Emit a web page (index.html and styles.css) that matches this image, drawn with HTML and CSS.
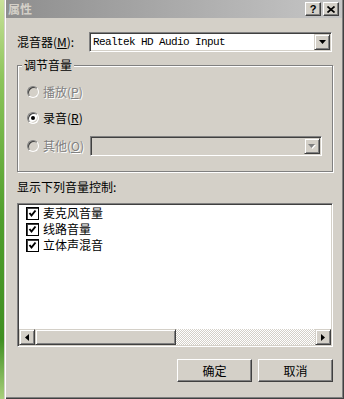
FILE: index.html
```html
<!DOCTYPE html>
<html>
<head>
    <meta charset="utf-8">
    <title>属性</title>
    <link rel="stylesheet" href="styles.css">
</head>
<body>
    <div class="desktop-strip"></div>
    <div class="window">
        <div class="titlebar">
            <span class="title">属性</span>
            <div class="caption-btns">
                <span class="cap-btn help">?</span>
                <span class="cap-btn close">
                    <svg width="8" height="7" viewBox="0 0 8 7"><path d="M0.5 0.5L7.5 6.5M7.5 0.5L0.5 6.5" stroke="#000" stroke-width="1.7"/></svg>
                </span>
            </div>
        </div>

        <div class="dialog-body">
            <div class="mixer-row">
                <label>混音器(<u>M</u>):</label>
                <div class="combo mixer-combo">
                    <span class="combo-text">Realtek HD Audio Input</span>
                    <span class="drop-btn">
                        <svg width="7" height="4" viewBox="0 0 7 4"><path d="M0 0H7L3.5 4Z" fill="#000"/></svg>
                    </span>
                </div>
            </div>

            <fieldset class="group">
                <legend>调节音量</legend>
                <div class="group-inner">
                    <div class="radio-row disabled">
                        <span class="radio"></span><span class="radio-text">播放(<u>P</u>)</span>
                    </div>
                    <div class="radio-row checked">
                        <span class="radio"></span><span class="radio-text">录音(<u>R</u>)</span>
                    </div>
                    <div class="radio-row disabled last">
                        <span class="radio"></span><span class="radio-text">其他(<u>O</u>)</span>
                        <div class="combo other-combo">
                            <span class="drop-btn">
                                <svg width="8" height="5" viewBox="0 0 8 5"><path d="M1 1H8L4.5 5Z" fill="#fff"/><path d="M0 0H7L3.5 4Z" fill="#808080"/></svg>
                            </span>
                        </div>
                    </div>
                </div>
            </fieldset>

            <div class="list-label">显示下列音量控制:</div>
            <div class="listbox">
                <div class="list-items">
                    <div class="list-item"><span class="check"><svg width="9" height="9" viewBox="0 0 9 9"><path d="M1.5 4L3.5 6.5L7.5 1.5" stroke="#000" stroke-width="2" fill="none"/></svg></span>麦克风音量</div>
                    <div class="list-item"><span class="check"><svg width="9" height="9" viewBox="0 0 9 9"><path d="M1.5 4L3.5 6.5L7.5 1.5" stroke="#000" stroke-width="2" fill="none"/></svg></span>线路音量</div>
                    <div class="list-item"><span class="check"><svg width="9" height="9" viewBox="0 0 9 9"><path d="M1.5 4L3.5 6.5L7.5 1.5" stroke="#000" stroke-width="2" fill="none"/></svg></span>立体声混音</div>
                </div>
                <div class="hscroll">
                    <span class="scroll-btn"><svg width="4" height="7" viewBox="0 0 4 7"><path d="M4 0V7L0 3.5Z" fill="#000"/></svg></span>
                    <span class="thumb"></span>
                    <span class="track"></span>
                    <span class="scroll-btn"><svg width="4" height="7" viewBox="0 0 4 7"><path d="M0 0V7L4 3.5Z" fill="#000"/></svg></span>
                </div>
            </div>

            <div class="buttons">
                <button class="btn">确定</button>
                <button class="btn">取消</button>
            </div>
        </div>
    </div>
</body>
</html>
```

FILE: styles.css
```css
body {
    margin: 0;
    padding: 0;
    display: flex;
    height: 399px;
    overflow: hidden;
    background-color: #d4d0c8;
    font-family: "Noto Sans CJK SC", "Liberation Sans", sans-serif;
    font-size: 12px;
    line-height: 14px;
    color: #000;
}
.desktop-strip {
    width: 4px;
    flex: none;
    background: linear-gradient(to bottom, #c9e19a 0%, #8cc45a 20%, #4f9e2c 55%, #3f8f22 85%, #a9cf7c 100%);
}
.window {
    width: 340px;
    height: 399px;
    box-sizing: border-box;
    padding: 0 2px 2px 2px;
    background-color: #d4d0c8;
    box-shadow: inset 1px 0 #d4d0c8, inset 2px 0 #fff, inset -1px -1px #404040, inset -2px -2px #808080;
}

/* title bar (inactive) */
.titlebar {
    height: 18px;
    margin-bottom: 1px;
    display: flex;
    align-items: center;
    justify-content: space-between;
    padding: 0 3px 0 2px;
    background: linear-gradient(to right, #8e8e8e, #c6c6c6);
}
.title {
    color: #d4d0c8;
    font-weight: bold;
}
.caption-btns {
    display: flex;
    gap: 2px;
}
.cap-btn {
    width: 16px;
    height: 14px;
    box-sizing: border-box;
    display: flex;
    align-items: center;
    justify-content: center;
    background-color: #d4d0c8;
    border: 1px solid;
    border-color: #fff #404040 #404040 #fff;
    box-shadow: inset -1px -1px #808080;
    font-family: "Liberation Sans", sans-serif;
    font-weight: bold;
    font-size: 11px;
    line-height: 12px;
}

.dialog-body {
    padding: 13px 9px 0 11px;
}

/* sunken combo box */
.mixer-row {
    display: flex;
    align-items: center;
    height: 20px;
}
.combo {
    height: 20px;
    box-sizing: border-box;
    display: flex;
    align-items: center;
    padding: 1px;
    background-color: #fff;
    border: 1px solid;
    border-color: #808080 #fff #fff #808080;
    box-shadow: inset 1px 1px #404040, inset -1px -1px #d4d0c8;
}
.mixer-combo {
    width: 243px;
    margin-left: auto;
    margin-right: 1px;
}
.combo-text {
    padding-left: 2px;
    font-family: "Liberation Mono", monospace;
    font-size: 11px;
    letter-spacing: -0.6px;
}
.drop-btn {
    width: 16px;
    height: 16px;
    box-sizing: border-box;
    margin-left: auto;
    display: flex;
    align-items: center;
    justify-content: center;
    background-color: #d4d0c8;
    border: 1px solid;
    border-color: #d4d0c8 #404040 #404040 #d4d0c8;
    box-shadow: inset 1px 1px #fff, inset -1px -1px #808080;
}

/* group box */
.group {
    margin: 6px 0 0 0;
    padding: 0;
    min-width: 0;
    border: 1px solid #808080;
    box-shadow: inset 1px 1px #fff, 1px 1px #fff;
}
.group legend {
    margin-left: 4px;
    padding: 0 2px;
    background-color: #d4d0c8;
    line-height: 14px;
}
.group-inner {
    display: flex;
    flex-direction: column;
    gap: 6px;
    padding: 10px 10px 15px 9px;
}
.radio-row {
    height: 20px;
    display: flex;
    align-items: center;
}
.radio-row.last {
    margin-top: 2px;
}
.radio {
    width: 12px;
    height: 12px;
    box-sizing: border-box;
    margin-right: 4px;
    position: relative;
    border-radius: 50%;
    background-color: #fff;
    border: 1px solid;
    border-color: #808080 #fff #fff #808080;
    box-shadow: inset 1px 1px #404040, inset -1px -1px #d4d0c8;
}
.radio-row.disabled .radio {
    background-color: #d4d0c8;
}
.radio-row.checked .radio::after {
    content: "";
    position: absolute;
    left: 3px;
    top: 3px;
    width: 4px;
    height: 4px;
    border-radius: 50%;
    background-color: #000;
}
.radio-row.disabled .radio-text {
    color: #808080;
    text-shadow: 1px 1px #fff;
}
.other-combo {
    width: 232px;
    margin-left: auto;
    background-color: #d4d0c8;
}

.list-label {
    margin-top: 8px;
}

/* list box with check items */
.listbox {
    margin-top: 9px;
    height: 144px;
    box-sizing: border-box;
    padding: 1px;
    display: flex;
    flex-direction: column;
    background-color: #fff;
    border: 1px solid;
    border-color: #808080 #fff #fff #808080;
    box-shadow: inset 1px 1px #404040, inset -1px -1px #d4d0c8;
}
.list-items {
    flex: 1;
}
.list-item {
    height: 16px;
    display: flex;
    align-items: center;
    padding-left: 7px;
}
.check {
    width: 13px;
    height: 13px;
    box-sizing: border-box;
    margin-right: 4px;
    display: flex;
    align-items: center;
    justify-content: center;
    border: 1px solid #000;
    box-shadow: inset 1px 1px #404040;
    background-color: #fff;
}
.hscroll {
    height: 16px;
    display: flex;
}
.scroll-btn, .thumb {
    height: 16px;
    box-sizing: border-box;
    display: flex;
    align-items: center;
    justify-content: center;
    background-color: #d4d0c8;
    border: 1px solid;
    border-color: #d4d0c8 #404040 #404040 #d4d0c8;
    box-shadow: inset 1px 1px #fff, inset -1px -1px #808080;
}
.scroll-btn {
    width: 16px;
}
.thumb {
    width: 141px;
}
.track {
    flex: 1;
    background: repeating-conic-gradient(#fff 0 25%, #d4d0c8 0 50%) 0 0 / 2px 2px;
}

.buttons {
    margin-top: 12px;
    display: flex;
    justify-content: flex-end;
    gap: 6px;
}
.btn {
    width: 75px;
    height: 23px;
    box-sizing: border-box;
    padding: 0;
    font-family: "Noto Sans CJK SC", sans-serif;
    font-size: 12px;
    color: #000;
    background-color: #d4d0c8;
    border: 1px solid;
    border-color: #fff #404040 #404040 #fff;
    box-shadow: inset -1px -1px #808080, inset 1px 1px #d4d0c8;
}
```
